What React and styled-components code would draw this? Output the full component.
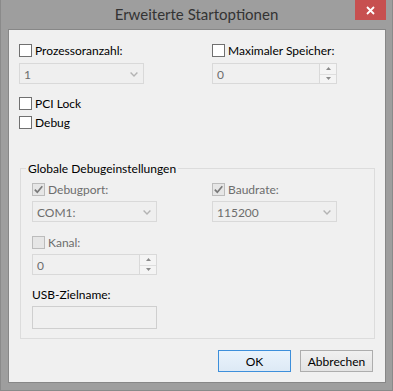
import React from 'react';
import styled, { createGlobalStyle } from 'styled-components';

const Global = createGlobalStyle`
  html, body { margin: 0; padding: 0; background: #9e9e9e; }
  body { font-family: Lato, "Noto Sans", "Liberation Sans", sans-serif; }
  * { box-sizing: border-box; }
`;

const Window = styled.div`
  width: 393px;
  height: 391px;
  background: #9e9e9e;
  border: 1px solid #8a8a8a;
  border-top: none;
  display: flex;
  flex-direction: column;
`;

const TitleBar = styled.div`
  height: 29px;
  flex: none;
  display: grid;
  grid-template-columns: 1fr auto 1fr;
  align-items: start;
`;

const Title = styled.div`
  grid-column: 2;
  padding-top: 5px;
  font-size: 15px;
  line-height: 19px;
  color: #333333;
  white-space: nowrap;
`;

const CloseButton = styled.div`
  grid-column: 3;
  justify-self: end;
  margin-right: 6px;
  width: 31px;
  height: 20px;
  background: #c75050;
  display: flex;
  align-items: center;
  justify-content: center;
`;

const Client = styled.div`
  flex: 1;
  margin: 0 6px 7px 7px;
  background: #f0f0f0;
  border: 1px solid #878787;
  padding: 14px 10px 0 10px;
  display: flex;
  flex-direction: column;
  font-size: 12px;
  color: #000;
`;

const TwoCols = styled.div`
  display: grid;
  grid-template-columns: ${(p) => p.$first}px 125px;
`;

const Field = styled.div`
  display: flex;
  flex-direction: column;
  gap: ${(p) => p.$gap}px;
`;

const CheckRow = styled.label`
  display: flex;
  align-items: center;
  height: 13px;
  gap: 3px;
  margin-top: ${(p) => p.$mt || 0}px;
  color: ${(p) => (p.$disabled ? '#6d6d6d' : '#000')};
  line-height: 15px;
  white-space: nowrap;
`;

const Box = styled.span`
  width: 13px;
  height: 13px;
  flex: none;
  border: 1px solid ${(p) => (p.$disabled ? '#bcbcbc' : '#707070')};
  background: ${(p) => (p.$disabled ? '#e6e6e6' : '#ffffff')};
  display: flex;
  align-items: center;
  justify-content: center;
`;

const Combo = styled.div`
  width: 125px;
  height: 21px;
  border: 1px solid #d9d9d9;
  background: #efefef;
  display: flex;
  align-items: center;
  justify-content: space-between;
  padding: 2px 5px 0 4px;
  color: #6d6d6d;
  line-height: 15px;
`;

const Chevron = styled.svg`
  width: 8px;
  height: 5px;
  margin-top: -1px;
`;

const Spin = styled.div`
  width: 125px;
  height: 21px;
  border: 1px solid #d9d9d9;
  background: #f0f0f0;
  display: flex;
  color: #6d6d6d;
  line-height: 15px;
`;

const SpinValue = styled.div`
  flex: 1;
  padding: 2px 4px 0;
  display: flex;
  align-items: center;
`;

const SpinButtons = styled.div`
  width: 17px;
  border-left: 1px solid #d9d9d9;
  display: grid;
  grid-template-rows: 1fr 1fr;
`;

const SpinHalf = styled.div`
  display: flex;
  align-items: center;
  justify-content: center;
  background: #f4f4f4;
  border-top: ${(p) => (p.$lower ? '1px solid #dedede' : 'none')};
`;

const Group = styled.div`
  position: relative;
  margin: 39px 0 0 1px;
  border: 1px solid #dcdcdc;
  padding: 14px 10px 9px 11px;
  display: flex;
  flex-direction: column;
`;

const Caption = styled.span`
  position: absolute;
  top: -8px;
  left: 5px;
  padding: 0 2px;
  background: #f0f0f0;
  line-height: 15px;
  color: #000;
`;

const PlainLabel = styled.div`
  margin-top: ${(p) => p.$mt}px;
  line-height: 15px;
  color: #000;
`;

const TextBox = styled.div`
  width: 125px;
  height: 23px;
  margin-top: 4px;
  border: 1px solid #cfcfcf;
  background: #f0f0f0;
`;

const ButtonRow = styled.div`
  display: flex;
  justify-content: flex-end;
  gap: 9px;
  margin: 11px 2px 0 0;
`;

const Button = styled.div`
  width: 73px;
  height: 22px;
  display: flex;
  align-items: center;
  justify-content: center;
  border: 1px solid ${(p) => (p.$default ? '#3d8fdb' : '#adadad')};
  background: ${(p) =>
    p.$default
      ? 'linear-gradient(#eaf3fc, #dde9f5)'
      : 'linear-gradient(#f0f0f0, #e3e3e3)'};
  color: #000;
  line-height: 15px;
  padding-top: 1px;
`;

const Check = ({ checked, disabled }) => (
  <Box $disabled={disabled}>
    {checked && (
      <svg width="11" height="11" viewBox="0 0 11 11">
        <path d="M1.8 5.6 L4.3 8.2 L9.3 2.2" fill="none" stroke="#7a7a7a" strokeWidth="1.7" />
      </svg>
    )}
  </Box>
);

const CheckField = ({ label, checked, disabled, mt }) => (
  <CheckRow $disabled={disabled} $mt={mt}>
    <Check checked={checked} disabled={disabled} />
    <span>{label}</span>
  </CheckRow>
);

const ComboBox = ({ value }) => (
  <Combo>
    <span>{value}</span>
    <Chevron viewBox="0 0 8 5">
      <path d="M0.6 0.6 L4 4 L7.4 0.6" fill="none" stroke="#b3b3b3" strokeWidth="1.4" />
    </Chevron>
  </Combo>
);

const SpinBox = ({ value }) => (
  <Spin>
    <SpinValue>{value}</SpinValue>
    <SpinButtons>
      <SpinHalf>
        <svg width="5" height="3" viewBox="0 0 5 3">
          <polygon points="0,3 2.5,0 5,3" fill="#8a8a8a" />
        </svg>
      </SpinHalf>
      <SpinHalf $lower>
        <svg width="5" height="3" viewBox="0 0 5 3">
          <polygon points="0,0 5,0 2.5,3" fill="#8a8a8a" />
        </svg>
      </SpinHalf>
    </SpinButtons>
  </Spin>
);

export default function App() {
  return (
    <>
      <Global />
      <Window>
        <TitleBar>
          <Title>Erweiterte Startoptionen</Title>
          <CloseButton>
            <svg width="9" height="9" viewBox="0 0 9 9">
              <path d="M1 1 L8 8 M8 1 L1 8" stroke="#ffffff" strokeWidth="1.8" />
            </svg>
          </CloseButton>
        </TitleBar>
        <Client>
          <TwoCols $first={193}>
            <Field $gap={6}>
              <CheckField label="Prozessoranzahl:" />
              <ComboBox value="1" />
            </Field>
            <Field $gap={6}>
              <CheckField label="Maximaler Speicher:" />
              <SpinBox value="0" />
            </Field>
          </TwoCols>
          <CheckField label="PCI Lock" mt={13} />
          <CheckField label="Debug" mt={6} />
          <Group>
            <Caption>Globale Debugeinstellungen</Caption>
            <TwoCols $first={180}>
              <Field $gap={5}>
                <CheckField label="Debugport:" checked disabled />
                <ComboBox value="COM1:" />
              </Field>
              <Field $gap={5}>
                <CheckField label="Baudrate:" checked disabled />
                <ComboBox value="115200" />
              </Field>
            </TwoCols>
            <Field $gap={5}>
              <CheckField label="Kanal:" disabled mt={14} />
              <SpinBox value="0" />
            </Field>
            <PlainLabel $mt={12}>USB-Zielname:</PlainLabel>
            <TextBox />
          </Group>
          <ButtonRow>
            <Button $default>OK</Button>
            <Button>Abbrechen</Button>
          </ButtonRow>
        </Client>
      </Window>
    </>
  );
}
